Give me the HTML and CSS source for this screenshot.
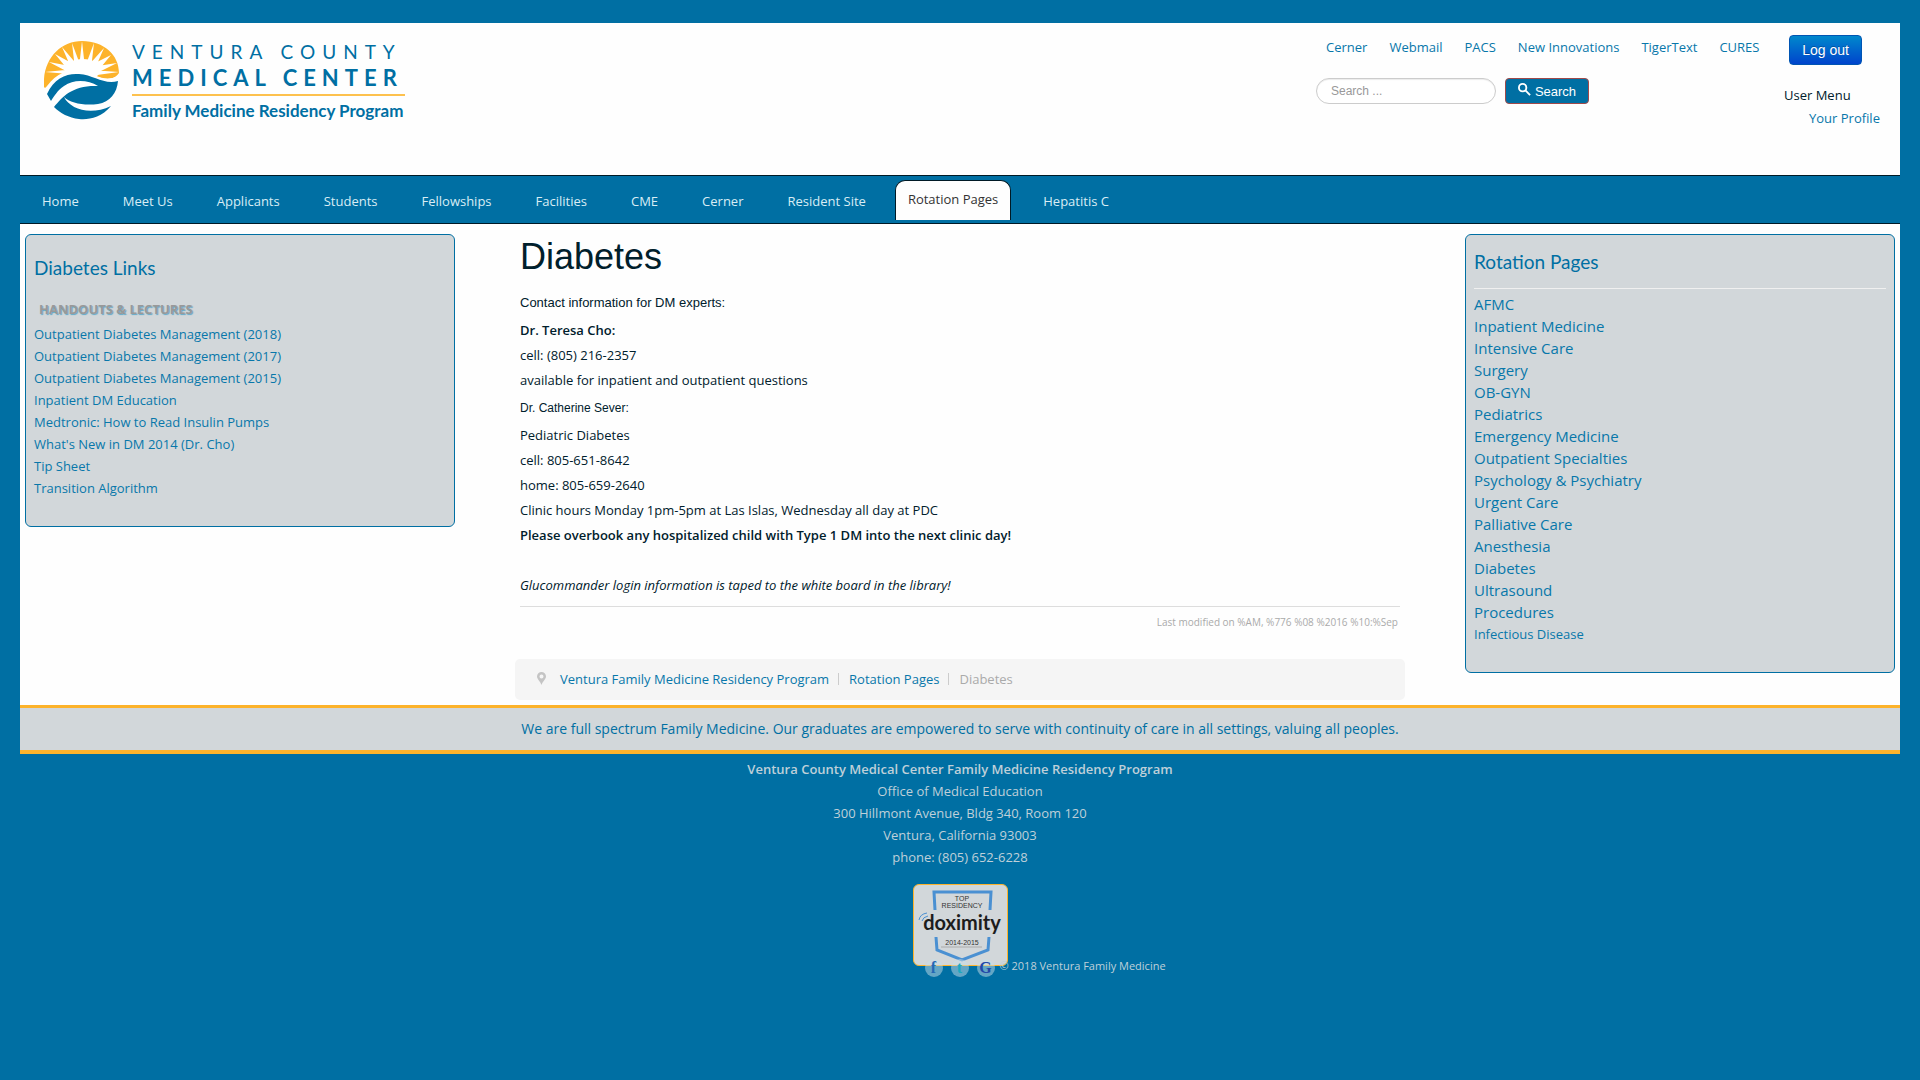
FILE: index.html
```html
<!DOCTYPE html>
<html lang="en">
<head>
<meta charset="utf-8">
<title>Diabetes - Ventura Family Medicine Residency Program</title>
<link rel="stylesheet" href="styles.css">
</head>
<body>
<div class="page">
  <header class="header">
    <a class="logo" href="#">
      <svg class="logo-mark" viewBox="0 0 76 80" aria-hidden="true">
        <path fill="#fdb32b" d="M0 47C-2 20 16 1 38 1C60 1 75 15 75 33C70 40 62 40 54 37C38 30 26 32 16 38C8 43 4 45 1 48Z"/>
        <g fill="#fff">
          <ellipse cx="39" cy="30" rx="17" ry="11"/>
          <path d="M35 28L38 1L41 28ZM31 29L28 3L37 27ZM41 27L50 3L47 29ZM28 30L18 7L35 27ZM43 27L60 8L50 31ZM25 31L11 14L33 26ZM45 26L67 15L53 32ZM24 32L5 22L31 27ZM47 27L73 23L53 33ZM25 34L1 32L31 29ZM47 30L75 32L53 35Z"/>
        </g>
        <path fill="#fff" d="M0 51C10 34 22 29 38 31C52 35 62 43 76 35V42L2 56Z"/>
        <path fill="#006fa3" d="M3 54C10 38 23 33 35 34C50 35 60 45 74 41C73 53 66 62 54 64C40 66 26 63 20 57C26 69 46 76 67 66C57 78 44 80 35 79C25 78 16 73 10 67C19 56 29 45 54 46C44 40 30 39 20 46C13 51 11 55 7 61Z"/>
      </svg>
      <span class="logo-text">
        <span class="logo-county">VENTURA COUNTY</span>
        <span class="logo-center">MEDICAL CENTER</span>
        <span class="logo-program">Family Medicine Residency Program</span>
      </span>
    </a>
    <div class="tools">
      <nav class="quick">
        <a href="#">Cerner</a><a href="#">Webmail</a><a href="#">PACS</a><a href="#">New Innovations</a><a href="#">TigerText</a><a href="#">CURES</a>
      </nav>
      <form class="search">
        <input class="search-box" type="search" placeholder="Search ..." aria-label="Search">
        <button class="search-button" type="button"><svg class="search-icon" viewBox="0 0 14 14" aria-hidden="true"><ellipse cx="5" cy="5" rx="4" ry="4" fill="none" stroke="#fff" stroke-width="2"/><path d="M8 8L13 13" stroke="#fff" stroke-width="2"/></svg>Search</button>
      </form>
    </div>
    <div class="user">
      <button class="logout" type="button">Log out</button>
      <div class="user-title">User Menu</div>
      <a class="profile" href="#">Your Profile</a>
    </div>
  </header>
  <nav class="menu">
    <a href="#">Home</a><a href="#">Meet Us</a><a href="#">Applicants</a><a href="#">Students</a><a href="#">Fellowships</a><a href="#">Facilities</a><a href="#">CME</a><a href="#">Cerner</a><a href="#">Resident Site</a><a class="active" href="#">Rotation Pages</a><a href="#">Hepatitis C</a>
  </nav>
  <div class="columns">
    <aside class="box links">
      <h3>Diabetes Links</h3>
      <h4>HANDOUTS &amp; LECTURES</h4>
      <ul>
        <li><a href="#">Outpatient Diabetes Management (2018)</a></li>
        <li><a href="#">Outpatient Diabetes Management (2017)</a></li>
        <li><a href="#">Outpatient Diabetes Management (2015)</a></li>
        <li><a href="#">Inpatient DM Education</a></li>
        <li><a href="#">Medtronic: How to Read Insulin Pumps</a></li>
        <li><a href="#">What's New in DM 2014 (Dr. Cho)</a></li>
        <li><a href="#">Tip Sheet</a></li>
        <li><a href="#">Transition Algorithm</a></li>
      </ul>
    </aside>
    <main class="main">
      <article class="article">
        <h1>Diabetes</h1>
        <h5>Contact information for DM experts:</h5>
        <p><strong>Dr. Teresa Cho:</strong></p>
        <p>cell: (805) 216-2357</p>
        <p>available for inpatient and outpatient questions</p>
        <h6>Dr. Catherine Sever:</h6>
        <p>Pediatric Diabetes</p>
        <p>cell: 805-651-8642</p>
        <p>home: 805-659-2640</p>
        <p>Clinic hours Monday 1pm-5pm at Las Islas, Wednesday all day at PDC</p>
        <p><strong>Please overbook any hospitalized child with Type 1 DM into the next clinic day!</strong></p>
        <p>&nbsp;</p>
        <p><em>Glucommander login information is taped to the white board in the library!</em></p>
        <div class="modified">Last modified on %AM, %776 %08 %2016 %10:%Sep</div>
      </article>
      <nav class="crumbs" aria-label="Breadcrumb">
        <svg class="pin" viewBox="0 0 9 13" aria-hidden="true"><path fill="#c4c4c4" fill-rule="evenodd" d="M4.500 0A4.500 4.500 0 0 1 9 4.500C9 7 6 9 4.500 13C3 9 0 7 0 4.500A4.500 4.500 0 0 1 4.500 0ZM4.500 2.500A2 2 0 0 0 4.500 6.500A2 2 0 0 0 4.500 2.500Z"/></svg>
        <a href="#">Ventura Family Medicine Residency Program</a>
        <a class="crumb-next" href="#">Rotation Pages</a>
        <span class="crumb-next">Diabetes</span>
      </nav>
    </main>
    <aside class="box rotations">
      <h3>Rotation Pages</h3>
      <ul>
        <li><a href="#">AFMC</a></li>
        <li><a href="#">Inpatient Medicine</a></li>
        <li><a href="#">Intensive Care</a></li>
        <li><a href="#">Surgery</a></li>
        <li><a href="#">OB-GYN</a></li>
        <li><a href="#">Pediatrics</a></li>
        <li><a href="#">Emergency Medicine</a></li>
        <li><a href="#">Outpatient Specialties</a></li>
        <li><a href="#">Psychology &amp; Psychiatry</a></li>
        <li><a href="#">Urgent Care</a></li>
        <li><a href="#">Palliative Care</a></li>
        <li><a href="#">Anesthesia</a></li>
        <li><a href="#">Diabetes</a></li>
        <li><a href="#">Ultrasound</a></li>
        <li><a href="#">Procedures</a></li>
        <li class="minor"><a href="#">Infectious Disease</a></li>
      </ul>
    </aside>
  </div>
  <div class="motto">We are full spectrum Family Medicine. Our graduates are empowered to serve with continuity of care in all settings, valuing all peoples.</div>
</div>
<footer class="footer">
  <div><strong>Ventura County Medical Center Family Medicine Residency Program</strong></div>
  <div>Office of Medical Education</div>
  <div>300 Hillmont Avenue, Bldg 340, Room 120</div>
  <div>Ventura, California 93003</div>
  <div>phone: (805) 652-6228</div>
  <div class="award">
    <a class="badge" href="#" aria-label="Doximity top residency">
      <svg viewBox="0 0 93 80" aria-hidden="true">
        <path d="M21 25L20 7H77L76 25" fill="none" stroke="#4a90d2" stroke-width="3"/>
        <path d="M22 52L23 65L48 75L74 65L75 52" fill="none" stroke="#4a90d2" stroke-width="3"/>
        <path d="M5 35Q6 29 13 28M8 36Q9 32 14 31" fill="none" stroke="#4a90d2" stroke-width="1"/>
        <path d="M27 62H68" stroke="#aaa"/>
        <text class="badge-top" x="48" y="16">TOP</text>
        <text class="badge-top" x="48" y="23">RESIDENCY</text>
        <text class="badge-name" x="48" y="45">doximity</text>
        <text class="badge-top" x="48" y="60">2014-2015</text>
      </svg>
    </a>
    <div class="social">
      <a class="face" href="#">f</a><a class="tweet" href="#">t</a><a class="google" href="#">G</a>
      <span class="copyright">© 2018 Ventura Family Medicine</span>
    </div>
  </div>
</footer>
</body>
</html>
```
FILE: styles.css
```css
* { box-sizing: border-box; }
body {
  margin: 0;
  padding: 23px 20px;
  background: #006fa3;
  color: #00202c;
  font: 13px/22px "Open Sans", sans-serif;
}
a { color: #0877aa; text-decoration: none; }
strong { font-weight: 600; }
h1, h3, h4, h5, h6, p, ul { margin: 0; padding: 0; font-weight: 400; }
ul { list-style: none; }
button, input { font-family: "Liberation Sans", Arial, sans-serif; }

.header {
  display: flex;
  align-items: flex-start;
  min-height: 152px;
  padding: 12px 20px 0 24px;
  background: #fefefe;
}
.logo { display: flex; gap: 12px; margin-right: auto; padding-top: 5px; color: #006fa3; }
.logo-mark { width: 76px; height: 80px; }
.logo-text { display: flex; flex-direction: column; width: 273px; font-family: Lato, sans-serif; white-space: nowrap; }
.logo-county { font-size: 19px; line-height: 24px; letter-spacing: 7px; }
.logo-center { padding: 2px 0 4px; border-bottom: 2px solid #fdc14e; font-size: 22px; line-height: 24px; font-weight: 700; letter-spacing: 6px; }
.logo-program { font-size: 17px; line-height: 30px; font-weight: 700; }

.tools { width: 473px; }
.quick { display: flex; gap: 22px; padding: 1px 10px 0; white-space: nowrap; }
.search { display: flex; gap: 9px; margin-top: 20px; }
.search-box {
  width: 180px;
  height: 26px;
  padding: 0 14px;
  border: 1px solid #ccc;
  border-radius: 13px;
  background: #fff;
  box-shadow: inset 0 1px 1px rgba(0, 0, 0, 0.08);
  font-size: 12px;
}
.search-box::placeholder { color: #999; opacity: 1; }
.search-button {
  width: 84px;
  height: 26px;
  padding: 0;
  border: 1px solid #a04a4a;
  border-radius: 4px;
  background: #006fa3;
  color: #fff;
  font-size: 13px;
}
.search-icon { width: 13px; height: 13px; margin-right: 4px; }
.user { width: 91px; white-space: nowrap; }
.logout {
  display: block;
  width: 73px;
  height: 30px;
  padding: 0;
  border: 1px solid #0055b3;
  border-radius: 4px;
  background: linear-gradient(#0088cc, #0044cc);
  color: #fff;
  font-size: 14px;
  text-shadow: 0 -1px 0 rgba(0, 0, 0, 0.25);
}
.user-title { margin: 19px 0 0 -5px; }
.profile { display: block; padding: 1px 0 0 20px; }

.menu {
  display: flex;
  gap: 23px;
  height: 49px;
  padding: 4px 11px 0;
  border: solid #001a26;
  border-width: 1px 0;
  background: #006fa3;
  white-space: nowrap;
}
.menu a { padding: 10px 10px 0 11px; color: #d9edf5; }
.menu a.active {
  height: 40px;
  margin: 0 -2px 0 -4px;
  padding: 7px 12px 0;
  border: 1px solid #001a26;
  border-bottom: 0;
  border-radius: 10px 10px 0 0;
  background: #fefefe;
  color: #333;
}

.columns {
  display: grid;
  grid-template-columns: 43fr 89fr 43fr;
  gap: 60px;
  align-items: start;
  padding: 10px 5px 5px;
  background: #fefefe;
}
.box { border: 1px solid #006fa3; border-radius: 6px; background: #d2d7da; }
.box h3 { color: #006fa3; font-family: Lato, sans-serif; font-size: 19px; line-height: 24px; }
.links { padding: 21px 8px 27px; }
.links h4 { padding: 17px 5px 0; color: #999; font-weight: 700; line-height: 24px; text-shadow: 1px 1px 1px #60a8c8; }
.links ul { padding-top: 2px; }
.rotations { padding: 15px 8px 27px; }
.rotations h3 { height: 39px; border-bottom: 1px solid #f0f0f0; }
.rotations ul { padding-top: 4px; font-size: 15px; }
.rotations .minor { font-size: 13px; }

.article { padding: 0 5px; line-height: 25px; }
h1, h5, h6 { font-family: "Liberation Sans", Arial, sans-serif; }
h1 { font-size: 36px; line-height: 46px; }
h5 { padding: 10px 0 3px; font-size: 13px; }
h6 { padding: 3px 0 2px; font-size: 12px; }
.modified { margin-top: 8px; padding: 3px 2px 0; border-top: 1px solid #ddd; color: #aaa; font-size: 10px; text-align: right; }
.crumbs { display: flex; align-items: center; height: 41px; margin-top: 24px; padding: 0 0 2px 22px; border-radius: 5px; background: #f5f5f5; color: #aaa; }
.pin { width: 9px; height: 13px; margin-right: 14px; }
.crumb-next { margin-left: 9px; padding-left: 10px; border-left: 1px solid #ccc; line-height: 12px; }

.motto { padding: 10px 0; border-top: 3px solid #fdb32b; border-bottom: 4px solid #fdb32b; background: #d2d7da; color: #006fa3; font-size: 14px; text-align: center; }

.footer { padding-top: 4px; color: #bfd0d9; text-align: center; }
.award { display: grid; justify-content: center; padding-top: 16px; }
.badge { display: block; width: 95px; height: 82px; border: 1px solid #fdb32b; border-radius: 6px; background: #d2d7da; }
.badge svg { display: block; width: 93px; height: 80px; }
.badge-top { fill: #333; font: 7px "Liberation Sans", sans-serif; text-anchor: middle; }
.badge-name { fill: #1c1c1c; font: 700 20px Lato, sans-serif; text-anchor: middle; }
.social { position: relative; display: flex; gap: 8px; width: 0; height: 18px; margin: -7px 0 0 12px; white-space: nowrap; }
.social a {
  flex: none;
  width: 18px;
  height: 18px;
  border-radius: 9px;
  background: rgba(200, 221, 232, 0.5);
  color: #2468b4;
  font: 700 16px/18px "Liberation Serif", serif;
}
.social .tweet { color: #1ba8c0; }
.social .google { color: #2348a8; }
.copyright { margin-left: -3px; font-size: 11px; line-height: 14px; }
```
